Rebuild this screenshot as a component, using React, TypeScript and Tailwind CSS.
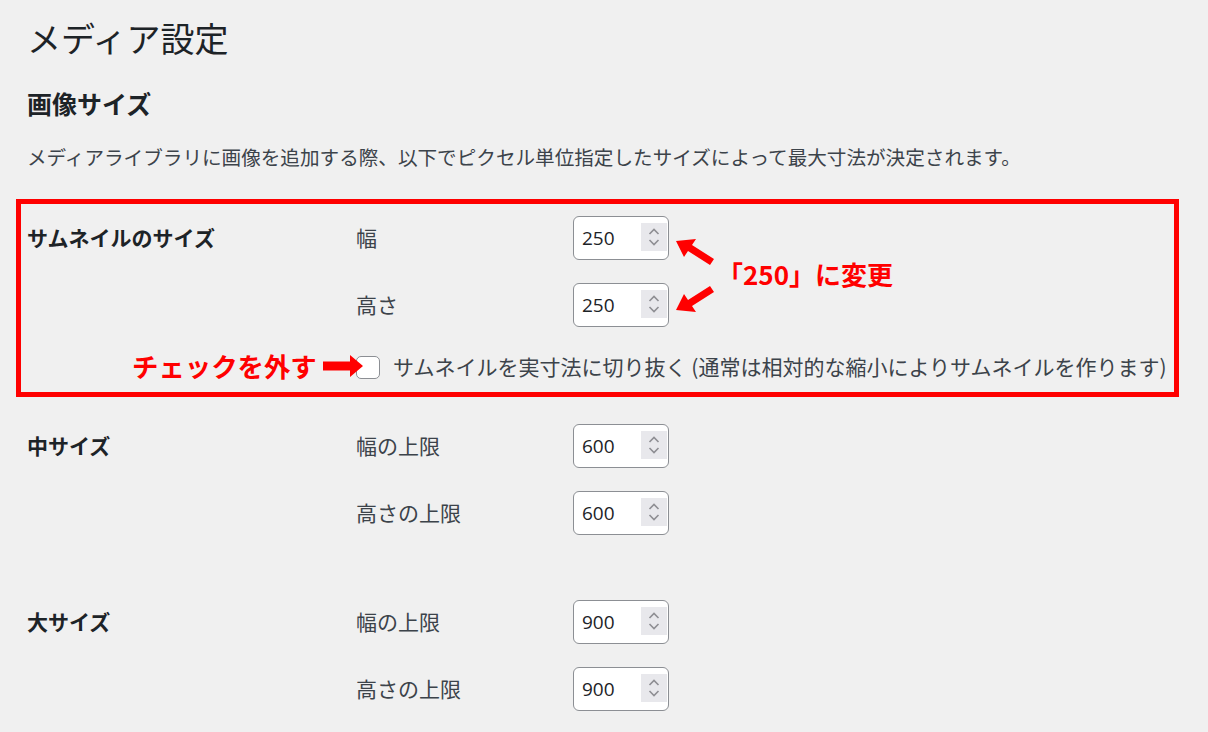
const jp = "font-['Meiryo','Noto_Sans_CJK_JP',sans-serif]"

function NumberBox({ value }: { value: string }) {
  return (
    <div className="relative flex h-[44px] w-[96px] items-center rounded-[6px] border border-[#8c8f94] bg-white pl-[8px]">
      <span className="font-['Open_Sans','Noto_Sans',sans-serif] text-[19px] text-[#1d2327]">{value}</span>
      {/* スピナー */}
      <div className="absolute right-[1px] top-[6px] flex h-[28px] w-[26px] flex-col items-center justify-center gap-[4px] bg-[#e8e8ec]">
        <svg width="12" height="7" viewBox="0 0 12 7">
          <path d="M1.5 6 L6 1.5 L10.5 6" fill="none" stroke="#8e8e93" strokeWidth="1.6" />
        </svg>
        <svg width="12" height="7" viewBox="0 0 12 7">
          <path d="M1.5 1 L6 5.5 L10.5 1" fill="none" stroke="#8e8e93" strokeWidth="1.6" />
        </svg>
      </div>
    </div>
  )
}

function Field({ label, value }: { label: string; value: string }) {
  return (
    <div className="flex h-[44px] items-center">
      <span className="w-[217px] text-[21px] text-[#3c434a]">{label}</span>
      <NumberBox value={value} />
    </div>
  )
}

function SizeRow({
  title,
  fields,
  highlight,
  children,
}: {
  title: string
  fields: { label: string; value: string }[]
  highlight?: boolean
  children?: React.ReactNode
}) {
  return (
    <div
      className={
        highlight
          ? 'relative flex border-[5px] border-[#ff0000] pl-[6px] pt-[12px] pb-[13px]'
          : 'relative flex border-[5px] border-transparent pl-[6px]'
      }
    >
      <div className="flex h-[44px] w-[329px] items-center text-[21px] font-bold text-[#1d2327]">{title}</div>
      <div className="flex flex-col gap-[23px]">
        {fields.map((f, i) => (
          <Field key={i} label={f.label} value={f.value} />
        ))}
        {children}
      </div>
    </div>
  )
}

export default function App() {
  return (
    <div className={`min-h-[732px] w-[1208px] overflow-hidden bg-[#f0f0f0] ${jp}`}>
      <div className="pl-[16px] pt-[15px]">
        <h1 className="pl-[11px] text-[34px] leading-[46px] text-[#1d2327]">メディア設定</h1>
        <h2 className="mt-[26px] pl-[11px] text-[25px] font-bold leading-[32px] text-[#1d2327]">画像サイズ</h2>
        <p className="mt-[24px] pl-[11px] text-[19.6px] leading-[28px] text-[#3c434a]">
          メディアライブラリに画像を追加する際、以下でピクセル単位指定したサイズによって最大寸法が決定されます。
        </p>

        <div className="mt-[28px] w-[1163px]">
          <SizeRow
            highlight
            title="サムネイルのサイズ"
            fields={[
              { label: '幅', value: '250' },
              { label: '高さ', value: '250' },
            ]}
          >
            <div className="relative mt-[5px] flex h-[24px] items-center">
              <div className="h-[23px] w-[24px] rounded-[5px] border border-[#8c8f94] bg-white" />
              <span className="ml-[13px] whitespace-nowrap text-[21px] text-[#3c434a]">
                サムネイルを実寸法に切り抜く (通常は相対的な縮小によりサムネイルを作ります)
              </span>
              {/* 注釈: チェックを外す */}
              <div className="absolute -left-[224px] top-[-9px] flex items-center">
                <span className="whitespace-nowrap text-[26.4px] font-bold leading-[40px] text-[#ff0000]">チェックを外す</span>
                <svg className="ml-[6px]" width="40" height="22" viewBox="0 0 40 22">
                  <path d="M0 6.5 H27 V0 L40 11 L27 22 V15.5 H0 Z" fill="#ff0000" />
                </svg>
              </div>
            </div>
            {/* 注釈: 250に変更 */}
            <svg className="absolute left-[655px] top-[31px]" width="45" height="80" viewBox="0 0 45 80">
              <polygon points="0,6 20,4 16,10 38,24 34,30 12,16 8,22" fill="#ff0000" />
              <polygon points="0,75 20,77 16,71 38,57 34,51 12,65 8,59" fill="#ff0000" />
            </svg>
            <span className="absolute left-[696px] top-[50px] whitespace-nowrap text-[26px] font-bold leading-[40px] text-[#ff0000]">
              「250」に変更
            </span>
          </SizeRow>

          <div className="mt-[22px]">
            <SizeRow
              title="中サイズ"
              fields={[
                { label: '幅の上限', value: '600' },
                { label: '高さの上限', value: '600' },
              ]}
            />
          </div>
          <div className="mt-[55px]">
            <SizeRow
              title="大サイズ"
              fields={[
                { label: '幅の上限', value: '900' },
                { label: '高さの上限', value: '900' },
              ]}
            />
          </div>
        </div>
      </div>
    </div>
  )
}
